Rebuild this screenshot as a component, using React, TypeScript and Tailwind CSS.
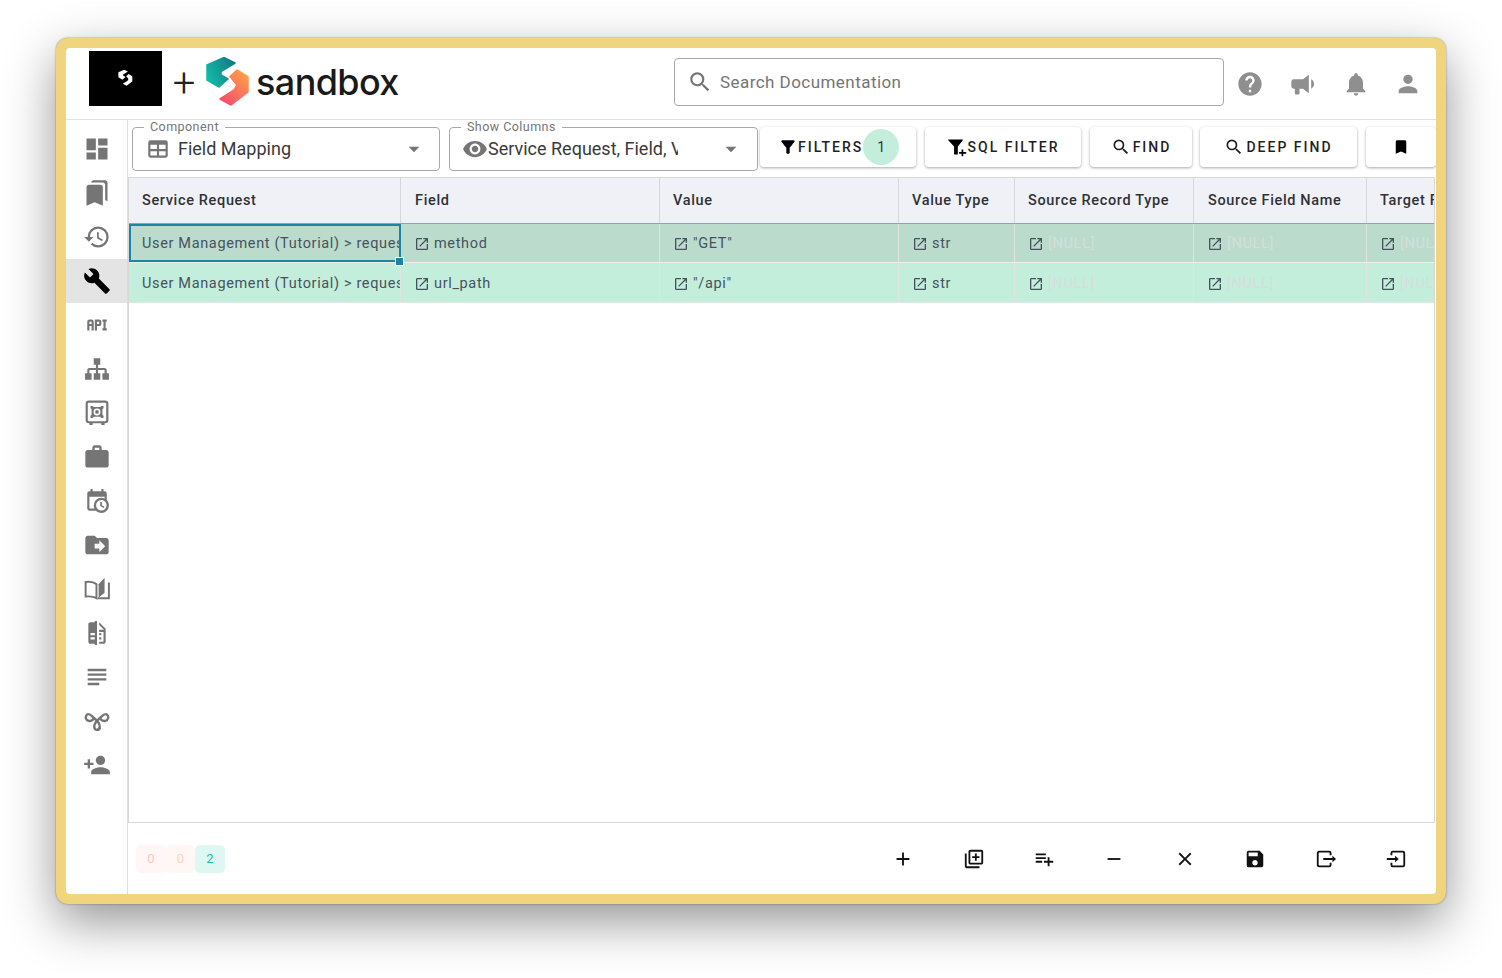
import React from "react";
import {
  MdDashboard, MdBookmarks, MdHistory, MdBuild, MdWork, MdDriveFileMove, MdSubject, MdPersonAdd,
  MdFilterAlt, MdSearch, MdBookmark, MdOpenInNew, MdAdd, MdOutlineLibraryAdd, MdPlaylistAdd, MdRemove,
  MdClose, MdSave, MdHelp, MdNotifications, MdPerson, MdVisibility, MdArrowDropDown,
} from "react-icons/md";

type P = { className?: string };
const Mdi = ({ d, className }: P & { d: string }) => (
  <svg viewBox="0 0 24 24" fill="currentColor" className={className}><path d={d} /></svg>
);
const ApiIcon = (p: P) => <Mdi {...p} d="M7 7H5A2 2 0 0 0 3 9V17H5V13H7V17H9V9A2 2 0 0 0 7 7M7 11H5V9H7M14 7H10V17H12V13H14A2 2 0 0 0 16 11V9A2 2 0 0 0 14 7M14 11H12V9H14M20 9V15H21V17H17V15H18V9H17V7H21V9Z" />;
const SitemapIcon = (p: P) => <Mdi {...p} d="M9,2V8H11V11H5C3.89,11 3,11.89 3,13V16H1V22H7V16H5V13H11V16H9V22H15V16H13V13H19V16H17V22H23V16H21V13C21,11.89 20.11,11 19,11H13V8H15V2H9Z" />;
const CalendarClockIcon = (p: P) => <Mdi {...p} d="M15,13H16.5V15.82L18.94,17.23L18.19,18.53L15,16.69V13M19,8H5V19H9.67C9.24,18.09 9,17.07 9,16A7,7 0 0,1 16,9C17.07,9 18.09,9.24 19,9.67V8M5,21C3.89,21 3,20.1 3,19V5C3,3.89 3.89,3 5,3H6V1H8V3H16V1H18V3H19A2,2 0 0,1 21,5V11.1C22.24,12.36 23,14.09 23,16A7,7 0 0,1 16,23C14.09,23 12.36,22.24 11.1,21H5M16,11.15A4.85,4.85 0 0,0 11.15,16C11.15,18.68 13.32,20.85 16,20.85A4.85,4.85 0 0,0 20.85,16C20.85,13.32 18.68,11.15 16,11.15Z" />;
const FileCompareIcon = (p: P) => <Mdi {...p} d="M10,18H6V16H10V18M10,14H6V12H10V14M10,1V2H6C4.89,2 4,2.89 4,4V20A2,2 0 0,0 6,22H10V23H12V1H10M20,8V20C20,21.11 19.11,22 18,22H14V20H18V11H14V9H18.5L14,4.5V2L20,8M16,14H14V12H16V14M16,18H14V16H16V18Z" />;
const TableIcon = (p: P) => <Mdi {...p} d="M5,4H19A2,2 0 0,1 21,6V18A2,2 0 0,1 19,20H5A2,2 0 0,1 3,18V6A2,2 0 0,1 5,4M5,8V12H11V8H5M13,8V12H19V8H13M5,14V18H11V14H5M13,14V18H19V14H13Z" />;
const BullhornIcon = (p: P) => <Mdi {...p} d="M12,8H4A2,2 0 0,0 2,10V14A2,2 0 0,0 4,16H5V20A1,1 0 0,0 6,21H8A1,1 0 0,0 9,20V16H12L17,20V4L12,8M21.5,12C21.5,13.71 20.54,15.26 19,16V8C20.53,8.75 21.5,10.3 21.5,12Z" />;
const SafeIcon = ({ className }: P) => (
  <svg viewBox="0 0 24 24" className={className} fill="none" stroke="currentColor">
    <rect x="2.5" y="1.5" width="19" height="19" rx="2" strokeWidth="2" />
    <path d="M5 21v2h3v-2zM16 21v2h3v-2z" fill="currentColor" stroke="none" />
    <path d="M6 5.5h2l1 1h6l1-1h2v2l-1 1v5l1 1v2h-2l-1-1H9l-1 1H6v-2l1-1v-5l-1-1z" fill="currentColor" stroke="none" />
    <circle cx="12" cy="11" r="3.2" fill="#fff" stroke="none" />
    <circle cx="12" cy="11" r="1.7" fill="currentColor" stroke="none" />
  </svg>
);
const BookIcon = ({ className }: P) => (
  <svg viewBox="0 0 24 24" className={className} fill="none" stroke="currentColor" strokeWidth="1.8">
    <path d="M11.5 20.5C9 19 5 18.6 1.5 19V5.5C5 5 9 5.5 11.5 7.5V20.5Z" />
    <path d="M12.5 20.5H23V6" />
    <path d="M13.5 7.5L19 1.5V15.5L13.5 20Z" fill="currentColor" stroke="none" />
  </svg>
);
const KnotIcon = ({ className }: P) => (
  <svg viewBox="0 0 24 24" className={className} fill="none" stroke="currentColor" strokeWidth="2.2">
    <path d="M15 18.5C13 21 10 21 9.5 17.5C9 14 12 11.5 15 9C17 7.2 19 4.5 21 6C23.4 7.8 22.4 11.5 19.5 12C17.5 12.4 16 11 15 10" />
    <path d="M9 10C8 11 6.5 12.4 4.5 12C1.6 11.5 0.6 7.8 3 6C5 4.5 7 7.2 9 9C12 11.5 15 14 14.5 17.5C14.2 19.4 13 20.2 12 20.2" />
  </svg>
);
const FilterPlusIcon = ({ className }: P) => (
  <svg viewBox="0 0 24 24" className={className} fill="currentColor">
    <path d="M2 3H18.5C19 3 19.3 3.6 19 4L13 11.5V21H8.5V11.5L1.5 4C1.2 3.6 1.5 3 2 3Z" />
    <path d="M17.5 15H19.5V18H23V20H19.5V23H17.5V20H14.5V18H17.5Z" />
  </svg>
);
const ExportIcon = ({ className }: P) => (
  <svg viewBox="0 0 24 24" className={className} fill="none" stroke="currentColor" strokeWidth="2">
    <path d="M17 8V5.5C17 4.7 16.3 4 15.5 4H4.5C3.7 4 3 4.7 3 5.5V18.5C3 19.3 3.7 20 4.5 20H15.5C16.3 20 17 19.3 17 18.5V16" />
    <path d="M9 12H21" />
    <path d="M19 8.5L23 12L19 15.5Z" fill="currentColor" stroke="none" />
  </svg>
);
const ImportIcon = ({ className }: P) => (
  <svg viewBox="0 0 24 24" className={className} fill="none" stroke="currentColor" strokeWidth="2">
    <path d="M7 8V5.5C7 4.7 7.7 4 8.5 4H19.5C20.3 4 21 4.7 21 5.5V18.5C21 19.3 20.3 20 19.5 20H8.5C7.7 20 7 19.3 7 18.5V16" />
    <path d="M2 12H13" />
    <path d="M11 8.5L15 12L11 15.5Z" fill="currentColor" stroke="none" />
  </svg>
);

const tealPath = "M18 0.5L29 6L15 14.5L15 18L22 22L13 30L1 23V8Z";
const coralPath = "M31 13L42 20V35L25 48L14 42L28 33L31 28L24 19.5Z";

const Logo = () => (
  <svg viewBox="0 0 44 50" className="h-[50px] w-[44px]">
    <defs>
      <linearGradient id="teal" x1="0" y1="0.7" x2="1" y2="0.2">
        <stop offset="0" stopColor="#14bba6" />
        <stop offset="1" stopColor="#0f7a88" />
      </linearGradient>
      <linearGradient id="coral" x1="0.8" y1="0.1" x2="0.2" y2="0.9">
        <stop offset="0" stopColor="#ff9a4a" />
        <stop offset="1" stopColor="#f6506c" />
      </linearGradient>
    </defs>
    <path d={tealPath} fill="url(#teal)" stroke="url(#teal)" strokeWidth="1.5" strokeLinejoin="round" />
    <path d={coralPath} fill="url(#coral)" stroke="url(#coral)" strokeWidth="1.5" strokeLinejoin="round" />
  </svg>
);

const big = "h-[28px] w-[28px]";
const navItems: { I: React.ComponentType<P>; size?: string; active?: boolean }[] = [
  { I: MdDashboard, size: big }, { I: MdBookmarks, size: big }, { I: MdHistory, size: big }, { I: MdBuild, size: big, active: true }, { I: ApiIcon },
  { I: SitemapIcon }, { I: SafeIcon }, { I: MdWork, size: big }, { I: CalendarClockIcon }, { I: MdDriveFileMove, size: big },
  { I: BookIcon }, { I: FileCompareIcon }, { I: MdSubject, size: big }, { I: KnotIcon }, { I: MdPersonAdd, size: big },
];

const Outlined = ({ label, children }: { label: string; children: React.ReactNode }) => (
  <div className="relative flex h-[44px] items-center rounded-[4px] border border-[#a8a8a8]">
    <span className="absolute -top-[8px] left-[11px] bg-white px-[6px] text-[12.5px] leading-[14px] tracking-[0.45px] text-[#757575]">{label}</span>
    {children}
  </div>
);

const Btn = ({ w, children }: { w: string; children: React.ReactNode }) => (
  <div className={`${w} flex h-[40px] shrink-0 items-center justify-center rounded-[4px] bg-white text-[14px] font-medium tracking-[2px] text-[#1f1f1f] shadow-[0_1px_3px_rgba(0,0,0,0.35)]`}>
    {children}
  </div>
);

const cols = ["Service Request", "Field", "Value", "Value Type", "Source Record Type", "Source Field Name", "Target Field Name"];
const headPad = ["pl-[13px]", "pl-[14px]", "pl-[13px]", "pl-[13px]", "pl-[13px]", "pl-[14px]", "pl-[13px]"];
const gridCols = "grid grid-cols-[272px_259px_239px_116px_179px_173px_68px]";

const Cell = ({ icon = true, text, muted, selected, last, pt }: { icon?: boolean; text: string; muted?: boolean; selected?: boolean; last?: boolean; pt: string }) => (
  <div className={`relative flex h-full items-center overflow-hidden whitespace-nowrap pl-[13px] ${pt} text-[14.5px] tracking-[0.65px] text-[#46535f] ${last || selected ? "" : "border-r border-[#dfe5e3]"}`}>
    {icon && <MdOpenInNew className="mr-[4px] h-[16px] w-[16px] shrink-0 text-[#46535f]" />}
    <span className={muted ? "text-[#d6dedb]" : ""}>{text}</span>
    {selected && <span className="absolute inset-0 border-2 border-[#1a85a5]" />}
  </div>
);

const Row = ({ h, pt, bg, border, selected, firstText, field, value }: { h: string; pt: string; bg: string; border: string; selected?: boolean; firstText: string; field: string; value: string }) => (
  <div className={`${gridCols} ${h} ${bg} border-b ${border}`}>
    <Cell pt={pt} icon={false} text={firstText} selected={selected} />
    <Cell pt={pt} text={field} />
    <Cell pt={pt} text={value} />
    <Cell pt={pt} text="str" />
    <Cell pt={pt} text="[NULL]" muted />
    <Cell pt={pt} text="[NULL]" muted />
    <Cell pt={pt} text="[NULL]" muted last />
  </div>
);

const actions: React.ComponentType<P>[] = [MdAdd, MdOutlineLibraryAdd, MdPlaylistAdd, MdRemove, MdClose, MdSave, ExportIcon, ImportIcon];

export default function App() {
  return (
    <div className="h-[978px] w-[1502px] overflow-hidden bg-white pl-[56px] pt-[38px] font-['Roboto',sans-serif]">
      <div className="h-[866px] w-[1390px] rounded-[12px] bg-[#f0d57e] p-[10px] shadow-[0_0_2px_rgba(0,0,0,0.45),0_18px_50px_rgba(0,0,0,0.42)]">
        <div className="flex h-full flex-col overflow-hidden rounded-[4px] bg-white">
          {/* Header */}
          <header className="flex h-[72px] shrink-0 items-start border-b border-[#e2e2e2]">
            <div className="ml-[23px] mt-[3px] flex h-[55px] w-[73px] shrink-0 items-center justify-center bg-black">
              <svg viewBox="0 0 44 50" className="h-[17px] w-[15px] -translate-y-[0.5px]" fill="#fff">
                <path d={tealPath} />
                <path d={coralPath} />
              </svg>
            </div>
            <span className="ml-[10px] mt-[13px] w-[24px] text-center text-[40px] font-light leading-[46px] text-[#222]">+</span>
            <div className="ml-[10px] mt-[9px] shrink-0"><Logo /></div>
            <span className="ml-[6px] mt-[12px] w-[144px] whitespace-nowrap font-['Inter',sans-serif] text-[36px] font-medium leading-[44px] tracking-[-0.6px] text-[#1a1a1a]">sandbox</span>
            <div className="ml-[274px] mt-[10px] flex h-[48px] w-[550px] shrink-0 items-center rounded-[4px] border border-[#a8a8a8] pl-[12px]">
              <MdSearch className="h-[26px] w-[26px] text-[#757575]" />
              <span className="ml-[7px] pt-[1px] text-[17px] tracking-[0.45px] text-[#757575]">Search Documentation</span>
            </div>
            <div className="ml-[12px] mt-[22px] flex items-center text-[#8f8f8f]">
              <MdHelp className="h-[28px] w-[28px]" />
              <BullhornIcon className="ml-[25px] h-[28px] w-[28px]" />
              <MdNotifications className="ml-[25px] h-[28px] w-[28px]" />
              <MdPerson className="ml-[24px] h-[28px] w-[28px]" />
            </div>
          </header>

          <div className="flex min-h-0 flex-1">
            {/* Sidebar */}
            <nav className="flex w-[62px] shrink-0 flex-col border-r border-[#dcdcdc] pt-[7px]">
              {navItems.map(({ I, active, size }, i) => (
                <div key={i} className={`flex h-[44px] shrink-0 items-center justify-center ${active ? "bg-[#e4e4e4] text-black" : "text-[#757575]"}`}>
                  <I className={size ?? "h-[26px] w-[26px]"} />
                </div>
              ))}
            </nav>

            {/* Main */}
            <main className="flex min-w-0 flex-1 flex-col">
              <div className="flex h-[57px] shrink-0 items-start gap-[9px] pl-[4px] pt-[7px]">
                <div className="w-[308px] shrink-0">
                  <Outlined label="Component">
                    <TableIcon className="ml-[12px] h-[26px] w-[26px] text-[#757575]" />
                    <span className="mb-[2px] ml-[7px] text-[18px] text-[#3a3a3a]">Field Mapping</span>
                    <MdArrowDropDown className="absolute right-[12px] h-[26px] w-[26px] text-[#757575]" />
                  </Outlined>
                </div>
                <div className="w-[309px] shrink-0">
                  <Outlined label="Show Columns">
                    <MdVisibility className="ml-[12px] h-[26px] w-[26px] shrink-0 text-[#757575]" />
                    <span className="mb-[2px] w-[190px] overflow-hidden whitespace-nowrap text-[18px] text-[#3a3a3a]">Service Request, Field, Value, Value Type</span>
                    <MdArrowDropDown className="absolute right-[13px] h-[26px] w-[26px] text-[#757575]" />
                  </Outlined>
                </div>
                <div className="-ml-[7px] flex items-start gap-[9px]">
                  <Btn w="w-[156px]">
                    <span className="flex w-full items-center pl-[18px]">
                      <MdFilterAlt className="h-[20px] w-[20px] text-black" />
                      <span>FILTERS</span>
                      <span className="flex h-[36px] w-[36px] items-center justify-center rounded-full bg-[#c3eedb] text-[14px] font-normal tracking-normal text-[#333]">1</span>
                    </span>
                  </Btn>
                  <Btn w="w-[156px]"><FilterPlusIcon className="mr-[1px] h-[20px] w-[20px] text-black" />SQL FILTER</Btn>
                  <Btn w="w-[102px]"><MdSearch className="mr-[2px] h-[20px] w-[20px]" />FIND</Btn>
                  <div className="-ml-px"><Btn w="w-[157px]"><MdSearch className="mr-[2px] h-[20px] w-[20px]" />DEEP FIND</Btn></div>
                  <Btn w="w-[70px]"><MdBookmark className="h-[18px] w-[18px] text-black" /></Btn>
                </div>
              </div>

              {/* Table */}
              <div className="relative mr-px min-h-0 flex-1 overflow-hidden border border-[#d8d8d8]">
                <div className={`${gridCols} h-[46px] border-b border-[#5fb6cf] bg-[#f0f1f7]`}>
                  {cols.map((c, i) => (
                    <div key={c} className={`flex items-center overflow-hidden whitespace-nowrap text-[14.5px] font-medium tracking-[0.65px] text-[#2f3236] ${headPad[i]} ${i < 6 ? "border-r border-[#d5d6de]" : ""}`}>{c}</div>
                  ))}
                </div>
                <Row h="h-[39px]" pt="pt-[1px]" bg="bg-[#bbdbcc]" border="border-[#e8efec]" selected firstText="User Management (Tutorial) > request" field="method" value={'"GET"'} />
                <Row h="h-[40px]" pt="pt-[2px]" bg="bg-[#c3eedb]" border="border-[#dfe8e4]" firstText="User Management (Tutorial) > request" field="url_path" value={'"/api"'} />
                <span className="absolute left-[266px] top-[79px] h-[9px] w-[9px] border border-white bg-[#1a85a5]" />
              </div>

              {/* Footer */}
              <div className="flex h-[71px] shrink-0 items-center pl-[8px]">
                <div className="flex h-[28px] text-[13px]">
                  <span className="flex w-[30px] items-center justify-center rounded-[5px] bg-[#fff6f5] text-[#ffc6c6]">0</span>
                  <span className="flex w-[29px] items-center justify-center rounded-[5px] bg-[#fff7f3] text-[#ffd5bd]">0</span>
                  <span className="flex w-[30px] items-center justify-center rounded-[5px] bg-[#def7f2] text-[#13c4ab]">2</span>
                </div>
                <div className="ml-[643px] flex text-[#111]">
                  {actions.map((A, i) => (
                    <span key={i} className="flex w-[70.4px] items-center justify-center">
                      <A className="h-[22px] w-[22px]" />
                    </span>
                  ))}
                </div>
              </div>
            </main>
          </div>
        </div>
      </div>
    </div>
  );
}
